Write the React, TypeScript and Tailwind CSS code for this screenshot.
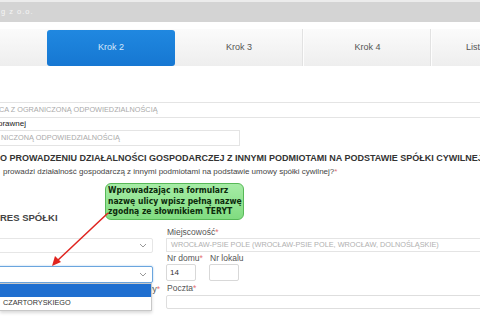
import React from "react";

const Chevron = () => (
  <svg width="8" height="5" viewBox="0 0 8 5" className="shrink-0">
    <path d="M1 1l3 3 3-3" fill="none" stroke="#999" strokeWidth="1" />
  </svg>
);

const Req = () => <span className="text-[#e57373]">*</span>;

const tabs = ["Krok 1", "Krok 2", "Krok 3", "Krok 4", "Lista"];

export default function App() {
  return (
    <div
      className="relative w-[480px] h-[320px] overflow-hidden bg-white text-[#333]"
      style={{ fontFamily: '"Liberation Sans", Arial, sans-serif' }}
    >
      {/* top bar */}
      <div className="h-[22px] bg-[#d4d4d4] border-t-2 border-[#ececec] flex items-center pl-[1px] text-[7.5px] tracking-[1px] text-[#f4f4f4]">
        g z o.o.
      </div>

      {/* steps */}
      <div className="mt-[7px] h-[37px] w-[640px] flex -ml-[81px] bg-gradient-to-b from-[#fbfbfb] to-[#eeeeee]">
        {tabs.map((t, i) =>
          i === 1 ? (
            <div
              key={t}
              className="w-[128px] shrink-0 h-[36px] mt-[1px] rounded-[3px] bg-gradient-to-b from-[#2088e0] to-[#1677d2] flex items-center justify-center text-[9px] text-[#d6e8fa]"
            >
              {t}
            </div>
          ) : i === 4 ? (
            <div
              key={t}
              className="w-[128px] shrink-0 flex items-center pl-[34px] text-[9px] text-[#555] border-l border-[#fdfdfd] shadow-[-1px_0_0_#e2e2e2]"
            >
              {t}
            </div>
          ) : (
            <div
              key={t}
              className={`w-[128px] shrink-0 flex items-center justify-center text-[9px] text-[#555] ${
                i === 3 ? "border-l border-[#fdfdfd] shadow-[-1px_0_0_#e2e2e2]" : ""
              }`}
            >
              {t}
            </div>
          )
        )}
      </div>

      {/* company form */}
      <div className="mt-[36px] -ml-[3px] w-[490px] h-[16px] border border-[#e4e4e4] flex items-center pl-[1px] text-[7.3px] text-[#aaa] whitespace-nowrap">
        CA Z OGRANICZONĄ ODPOWIEDZIALNOŚCIĄ
      </div>
      <div className="h-[12px] leading-[12px] text-[8px] text-[#222] -ml-[2px]">prawnej</div>
      <div className="-ml-[3px] w-[243px] h-[16px] border border-[#e4e4e4] flex items-center pl-[3px] text-[7.3px] text-[#aaa] whitespace-nowrap">
        NICZONĄ ODPOWIEDZIALNOŚCIĄ
      </div>

      <div className="mt-[5px] h-[14px] leading-[14px] text-[9px] font-bold text-[#333] whitespace-nowrap">
        O PROWADZENIU DZIAŁALNOŚCI GOSPODARCZEJ Z INNYMI PODMIOTAMI NA PODSTAWIE SPÓŁKI CYWILNEJ
      </div>
      <div className="mt-[1px] h-[12px] leading-[12px] text-[8px] text-[#444] pl-[3px] whitespace-nowrap">
        prowadzi działalność gospodarczą z innymi podmiotami na podstawie umowy spółki cywilnej?<Req />
      </div>

      <div className="mt-[33px] h-[14px] leading-[14px] text-[9.5px] font-bold text-[#444] whitespace-nowrap">
        RES SPÓŁKI
      </div>

      {/* address grid */}
      <div className="flex">
        <div className="w-[160px] shrink-0 relative">
          <div className="mt-[13px] -ml-[3px] w-[156px] h-[15px] border border-[#e6e6e6] rounded-[2px] flex items-center justify-end pr-[5px]">
            <Chevron />
          </div>
          <div className="mt-[13px] -ml-[3px] w-[156px] h-[17px] border border-[#6aa5de] rounded-[2px] flex items-center justify-end pr-[5px] shadow-[0_0_2px_#9cc4ec]">
            <Chevron />
          </div>
          <div className="h-[13px] leading-[13px] text-[8.5px] text-[#555] text-right">
            Kod pocztowy<Req />
          </div>
          {/* dropdown */}
          <div className="absolute left-0 top-[58px] w-[152px] bg-white border border-[#c8c8c8] border-l-0 shadow-[0_2px_3px_rgba(0,0,0,0.15)]">
            <div className="h-[13px] bg-[#1f6fd0]" />
            <div className="h-[13px] flex items-center pl-[3px] text-[7.3px] text-[#333] whitespace-nowrap">
              CZARTORYSKIEGO
            </div>
          </div>
        </div>

        <div className="ml-[6px] shrink-0">
          <div className="mt-[1px] h-[12px] leading-[12px] text-[8.5px] text-[#555] pl-[1px]">
            Miejscowość<Req />
          </div>
          <div className="w-[330px] h-[14px] border border-[#e4e4e4] flex items-center pl-[4px] text-[7.3px] text-[#b0b0b0] whitespace-nowrap">
            WROCŁAW-PSIE POLE (WROCŁAW-PSIE POLE, WROCŁAW, DOLNOŚLĄSKIE)
          </div>
          <div className="flex gap-[13px]">
            <div className="w-[30px]">
              <div className="h-[11px] leading-[11px] mt-[1px] text-[8.5px] text-[#555] pl-[1px] whitespace-nowrap">
                Nr domu<Req />
              </div>
              <div className="h-[17px] border border-[#d8d8d8] rounded-[2px] flex items-center pl-[3px] text-[8px] text-[#333]">
                14
              </div>
            </div>
            <div className="w-[30px]">
              <div className="h-[11px] leading-[11px] mt-[1px] text-[8.5px] text-[#555] pl-[1px] whitespace-nowrap">
                Nr lokalu
              </div>
              <div className="h-[17px] border border-[#d8d8d8] rounded-[2px]" />
            </div>
          </div>
          <div className="h-[14px] leading-[14px] text-[8.5px] text-[#555] pl-[1px]">
            Poczta<Req />
          </div>
          <div className="w-[330px] h-[14px] border border-[#dedede] rounded-[2px]" />
        </div>
      </div>

      {/* hint callout */}
      <div
        className="absolute left-[105px] top-[183px] w-[139px] h-[37px] rounded-[6px] border border-[#57b857] bg-gradient-to-b from-[#a6eca6] to-[#80dc80] pl-[2px] pt-[1px] text-[8.5px] leading-[10.5px] font-bold text-[#0b2a0b] whitespace-nowrap"
        style={{ fontFamily: '"DejaVu Sans Condensed", "DejaVu Sans", sans-serif' }}
      >
        <div>Wprowadzając na formularz</div>
        <div>nazwę ulicy wpisz pełną nazwę</div>
        <div>zgodną ze słownikiem TERYT</div>
      </div>

      {/* arrow */}
      <svg className="absolute left-0 top-0 pointer-events-none" width="480" height="320">
        <line x1="108" y1="213" x2="57" y2="261" stroke="#e0241f" strokeWidth="1.5" />
        <path d="M52 266 L55 256 L61 262 Z" fill="#e0241f" />
      </svg>
    </div>
  );
}
